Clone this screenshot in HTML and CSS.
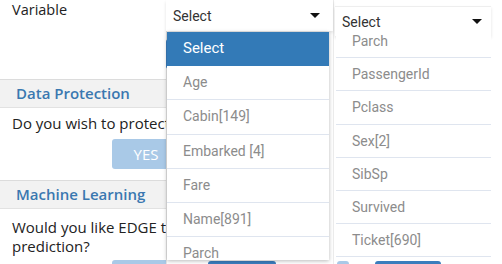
FILE: index.html
```html
<!DOCTYPE html>
<html lang="en">

<head>
    <meta charset="UTF-8">
    <title>Variable Settings</title>
    <link rel="stylesheet" href="styles.css">
</head>

<body>

    <div class="screen">

        <div class="panel">
            <div class="field-label">Variable</div>

            <div class="section-head">Data Protection</div>
            <p class="question">Do you wish to protect the data of this variable?</p>
            <div class="btn-row">
                <button class="btn-yes">YES</button>
            </div>

            <div class="section-head">Machine Learning</div>
            <p class="question two-line">Would you like EDGE to use this variable for prediction?</p>
            <div class="btn-row">
                <button class="btn-yes">YES</button>
            </div>
        </div>

        <div class="col col-mid">
            <div class="select-box">
                <span>Select</span>
                <span class="caret"></span>
            </div>
            <button class="btn-apply">Apply</button>
            <button class="btn-under first"></button>

            <ul class="menu">
                <li class="selected">Select</li>
                <li>Age</li>
                <li>Cabin[149]</li>
                <li>Embarked [4]</li>
                <li>Fare</li>
                <li>Name[891]</li>
                <li>Parch</li>
                <li>PassengerId</li>
            </ul>
        </div>

        <div class="col col-right">
            <div class="select-box">
                <span>Select</span>
                <span class="caret"></span>
            </div>
            <button class="btn-under second"></button>
            <button class="btn-under third"></button>

            <div class="menu menu-scrolled">
                <ul class="menu-inner">
                    <li>Parch</li>
                    <li>PassengerId</li>
                    <li>Pclass</li>
                    <li>Sex[2]</li>
                    <li>SibSp</li>
                    <li>Survived</li>
                    <li>Ticket[690]</li>
                </ul>
            </div>
        </div>

    </div>

</body>

</html>
```

FILE: styles.css
```css
body {
    margin: 0;
    background: #fff;
}

.screen {
    display: flex;
    width: 502px;
    height: 264px;
    overflow: hidden;
    font-family: "Open Sans", sans-serif;
    color: #222;
}

/* left settings panel */

.panel {
    width: 166px;
    flex-shrink: 0;
    border-right: 1px solid #e6e6e6;
    overflow: hidden;
    white-space: nowrap;
}

.field-label {
    font-size: 14.5px;
    padding: 0 12px;
    height: 79px;
}

.section-head {
    height: 27px;
    line-height: 27px;
    padding-left: 16px;
    background: #f2f2f2;
    border-top: 1px solid #dcdcdc;
    border-bottom: 1px solid #e2e2e2;
    color: #3a78b0;
    font-size: 15px;
    font-weight: 600;
}

.question {
    margin: 0;
    padding: 6px 12px 0;
    font-size: 15px;
    line-height: 19px;
}

.two-line {
    white-space: normal;
    width: 340px;
    padding-top: 9px;
}

.btn-row {
    padding: 6px 0 0 112px;
    height: 41px;
}

.two-line + .btn-row {
    padding-top: 4px;
}

.btn-yes {
    width: 68px;
    height: 30px;
    border: 0;
    border-radius: 3px;
    background: #a9c9e7;
    color: #fff;
    font-family: "Open Sans", sans-serif;
    font-size: 15px;
    padding: 0;
}

/* select columns */

.col {
    position: relative;
    font-family: Roboto, sans-serif;
    font-size: 14px;
}

.col-mid {
    width: 166px;
    flex-shrink: 0;
    border-right: 1px solid #ececec;
}

.col-right {
    flex: 1;
}

.select-box {
    display: flex;
    justify-content: space-between;
    align-items: center;
    height: 30px;
    color: #333;
    background: #fff;
    box-shadow: 0 2px 3px rgba(0, 0, 0, 0.12);
}

.col-mid .select-box {
    margin: 0 0 0 -1px;
    height: 31px;
    padding: 0 13px 0 7px;
}

.col-right .select-box {
    margin: 6px 11px 0 1px;
    padding: 0 9px 0 7px;
    height: 29px;
    border-top: 1px solid #eee;
}

.caret {
    width: 0;
    height: 0;
    border-left: 5px solid transparent;
    border-right: 5px solid transparent;
    border-top: 5px solid #111;
}

.btn-apply {
    margin: 8px 0 0 -1px;
    width: 90px;
    height: 30px;
    border: 0;
    background: #3a7dbd;
    border-radius: 3px;
}

.btn-under {
    position: absolute;
    top: 261px;
    height: 20px;
    border: 0;
    border-radius: 3px;
    background: #3a7dbd;
}

.btn-under.first {
    left: 41px;
    width: 68px;
}

.btn-under.second {
    left: 41px;
    width: 66px;
}

.btn-under.third {
    left: 3px;
    width: 10px;
    background: #a9c9e7;
}

/* open dropdown menus */

.menu {
    position: absolute;
    margin: 0;
    padding: 0;
    list-style: none;
    background: #fff;
    overflow: hidden;
    box-shadow: 0 1px 4px rgba(0, 0, 0, 0.28);
    color: #8c8c8c;
}

.col-mid .menu {
    top: 32px;
    left: 0;
    width: 162px;
    height: 228px;
}

.menu li {
    height: 33.2px;
    line-height: 33.2px;
    padding-left: 16px;
    border-bottom: 1px solid #dfe5ef;
}

.menu li.selected {
    background: #337ab7;
    color: #fff;
    font-size: 15px;
    border-bottom-color: #337ab7;
}

.menu-scrolled {
    top: 35px;
    left: 2px;
    width: 155px;
    height: 224px;
    box-shadow: none;
}

.menu-inner {
    margin: -10px 0 0;
    padding: 0;
    list-style: none;
}

.menu-inner li {
    height: 32.2px;
    line-height: 32.2px;
}
```
